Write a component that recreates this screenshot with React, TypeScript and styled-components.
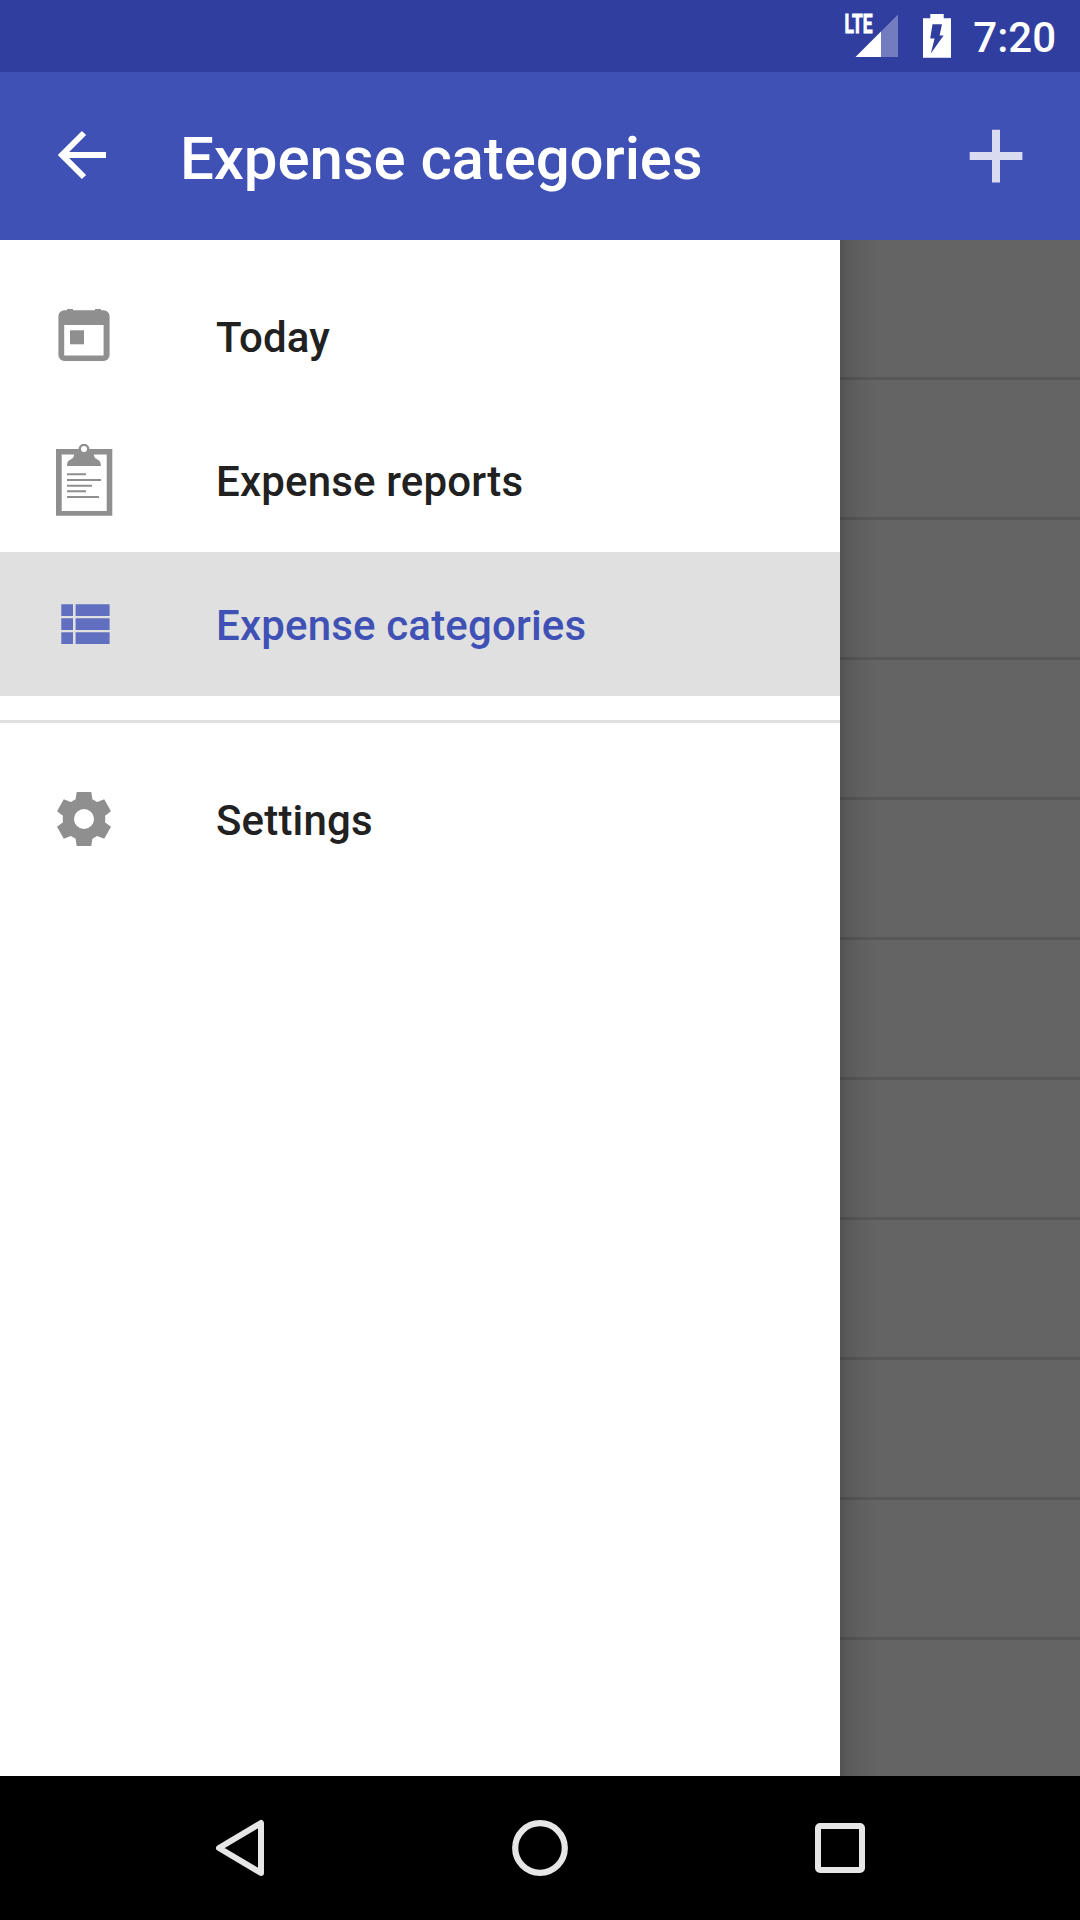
import React from "react";
import styled, { createGlobalStyle } from "styled-components";

const GlobalStyle = createGlobalStyle`
  *, *::before, *::after { box-sizing: border-box; }
  body {
    margin: 0;
    font-family: Roboto, "Noto Sans", sans-serif;
    background: #000;
  }
  svg { display: block; flex: none; }
`;

const Screen = styled.div`
  display: flex;
  flex-direction: column;
  width: 1080px;
  height: 1920px;
  overflow: hidden;
`;

const StatusBar = styled.header`
  display: flex;
  justify-content: flex-end;
  align-items: center;
  height: 72px;
  padding-right: 24px;
  background: #303f9f;
`;

const Clock = styled.time`
  margin-left: 18px;
  padding-top: 3px;
  color: #fff;
  font-size: 42px;
  font-weight: 500;
  line-height: 72px;
`;

const Toolbar = styled.div`
  display: flex;
  align-items: center;
  height: 168px;
  padding: 0 48px;
  background: #3f51b5;
`;

const IconButton = styled.button`
  display: flex;
  padding: 0;
  border: 0;
  background: none;
`;

const Title = styled.h1`
  flex: 1;
  margin: 0;
  padding: 6px 0 0 60px;
  color: #fff;
  font-size: 60px;
  font-weight: 500;
  letter-spacing: -0.11px;
  line-height: 72px;
  white-space: nowrap;
`;

const Body = styled.div`
  display: flex;
  height: 1536px;
`;

const Drawer = styled.nav`
  width: 840px;
  padding-top: 24px;
  background: #fff;
`;

const MenuItem = styled.a<{ $active?: boolean }>`
  display: flex;
  align-items: center;
  height: 144px;
  padding-left: 48px;
  background: ${(p) => (p.$active ? "#e0e0e0" : "transparent")};
  color: ${(p) => (p.$active ? "#3f51b5" : "#212121")};

  svg { color: ${(p) => (p.$active ? "#606fc0" : "#8f8f8f")}; }
`;

const MenuLabel = styled.span`
  margin-left: 96px;
  padding-top: 4px;
  font-size: 42px;
  font-weight: 500;
  letter-spacing: 0.17px;
  line-height: 50px;
`;

const Divider = styled.hr`
  height: 3px;
  margin: 24px 0;
  border: 0;
  background: #e0e0e0;
`;

const DimmedList = styled.div`
  flex: 1;
  background: linear-gradient(to right, #525252 0, #5a5a5a 8px, #606060 22px, #646464 39px);
`;

const DimmedRow = styled.div`
  height: 140px;
  border-bottom: 3px solid rgba(0, 0, 0, 0.12);
`;

const NavigationBar = styled.footer`
  display: flex;
  justify-content: space-between;
  align-items: center;
  height: 144px;
  padding: 0 204px;
  background: #000;
`;

const StatusIcons = () => (
  <svg width="112" height="72" viewBox="843 0 112 72">
    <text
      x="844.5"
      y="33.2"
      fill="#fff"
      stroke="#fff"
      strokeWidth="0.9"
      fontFamily="Roboto, sans-serif"
      fontWeight="700"
      fontSize="26"
      textLength="28"
      lengthAdjust="spacingAndGlyphs"
    >
      LTE
    </text>
    <path d="M881 31.5L898 14.5V57H881Z" fill="#fff" fillOpacity="0.32" />
    <path d="M855.5 57L881 31.5V57Z" fill="#fff" />
    <path
      fill="#fff"
      fillRule="evenodd"
      d="M930.3 14H943.7V18.3H951V57.7H923V18.3H930.3ZM932.5 24.3L930.2 38.5H934.6L930.8 53.5L943.6 35.5H939.6L942 24.3Z"
    />
  </svg>
);

const BackArrow = () => (
  <svg width="72" height="72" viewBox="48 120 72 72" fill="none" stroke="#fff" strokeWidth="6">
    <path d="M84 133L62 155L84 177" />
    <path d="M61 155H106" />
  </svg>
);

const PlusIcon = () => (
  <svg width="72" height="72" viewBox="960 120 72 72">
    <path fill="#d9dcf0" d="M992 129.7h8V152h22.4v8H1000v22.4h-8V160h-22.3v-8H992z" />
  </svg>
);

const TodayIcon = () => (
  <svg width="72" height="72" viewBox="48 300 72 72" fill="currentColor">
    <path
      fillRule="evenodd"
      d="M67 309h6v1.3h22V309h6v1.3h2.6a6 6 0 0 1 6 6V355a6 6 0 0 1-6 6H64.4a6 6 0 0 1-6-6V316.3a6 6 0 0 1 6-6H67zM64.2 325v30.6h39.4V325z"
    />
    <path d="M70 330.3h14v14H70z" />
  </svg>
);

const ReportsIcon = () => (
  <svg width="72" height="72" viewBox="48 444 72 72" fill="currentColor">
    <path fillRule="evenodd" d="M56 449h56.3v66.8H56zM61.7 454.4V511h45v-56.6z" />
    <path d="M74 454H94C93.7 461 101 457.5 101 466H67C67 457.5 74.3 461 74 454Z" />
    <circle cx="84" cy="449.4" r="5.6" />
    <circle cx="84" cy="449" r="3" fill="#fff" />
    <path
      d="M67 474.3H86M67 480H101M67 485.7H92M67 491.2H86M67 497H99"
      stroke="currentColor"
      strokeWidth="2"
    />
  </svg>
);

const CategoriesIcon = () => (
  <svg width="72" height="72" viewBox="48 588 72 72" fill="currentColor">
    <path d="M61.3 604.3H73V616H61.3zM75.6 604.3H109.6V616H75.6zM61.3 618.3H73V630H61.3zM75.6 618.3H109.6V630H75.6zM61.3 632.3H73V644H61.3zM75.6 632.3H109.6V644H75.6z" />
  </svg>
);

const SettingsIcon = () => (
  <svg width="72" height="72" viewBox="48 783 72 72" fill="currentColor">
    <path
      fillRule="evenodd"
      d="M76.7 792H91.3L92.4 799.2L97.2 802L104.2 799.3L111 811.2L105 815.8L105.3 819L105 822.2L111 826.8L104.2 838.7L97.2 836L92.4 838.8L91.3 846H76.7L75.6 838.8L70.8 836L63.8 838.7L57 826.8L63 822.2L62.7 819L63 815.8L57 811.2L63.8 799.3L70.8 802L75.6 799.2ZM84 809A10 10 0 1 0 84 829A10 10 0 1 0 84 809Z"
    />
  </svg>
);

const NavBack = () => (
  <svg width="72" height="72" viewBox="204 1812 72 72" fill="none" stroke="#e6e6e6" strokeWidth="6" strokeLinejoin="round">
    <path d="M261 1823V1873L219 1848Z" />
  </svg>
);

const NavHome = () => (
  <svg width="72" height="72" viewBox="504 1812 72 72" fill="none" stroke="#e6e6e6" strokeWidth="6.2">
    <circle cx="540" cy="1848" r="24.8" />
  </svg>
);

const NavRecents = () => (
  <svg width="72" height="72" viewBox="804 1812 72 72" fill="#e6e6e6">
    <path
      fillRule="evenodd"
      d="M820 1823H860a5 5 0 0 1 5 5V1868a5 5 0 0 1-5 5H820a5 5 0 0 1-5-5V1828a5 5 0 0 1 5-5ZM821 1829V1867H859V1829Z"
    />
  </svg>
);

const rows = Array.from({ length: 10 }, (_, i) => i);

export default function App() {
  return (
    <Screen>
      <GlobalStyle />
      <StatusBar>
        <StatusIcons />
        <Clock>7:20</Clock>
      </StatusBar>
      <Toolbar>
        <IconButton aria-label="Back"><BackArrow /></IconButton>
        <Title>Expense categories</Title>
        <IconButton aria-label="Add category"><PlusIcon /></IconButton>
      </Toolbar>
      <Body>
        <Drawer>
          <MenuItem><TodayIcon /><MenuLabel>Today</MenuLabel></MenuItem>
          <MenuItem><ReportsIcon /><MenuLabel>Expense reports</MenuLabel></MenuItem>
          <MenuItem $active><CategoriesIcon /><MenuLabel>Expense categories</MenuLabel></MenuItem>
          <Divider />
          <MenuItem><SettingsIcon /><MenuLabel>Settings</MenuLabel></MenuItem>
        </Drawer>
        <DimmedList>
          {rows.map((row) => <DimmedRow key={row} />)}
        </DimmedList>
      </Body>
      <NavigationBar>
        <IconButton aria-label="Back"><NavBack /></IconButton>
        <IconButton aria-label="Home"><NavHome /></IconButton>
        <IconButton aria-label="Recents"><NavRecents /></IconButton>
      </NavigationBar>
    </Screen>
  );
}
